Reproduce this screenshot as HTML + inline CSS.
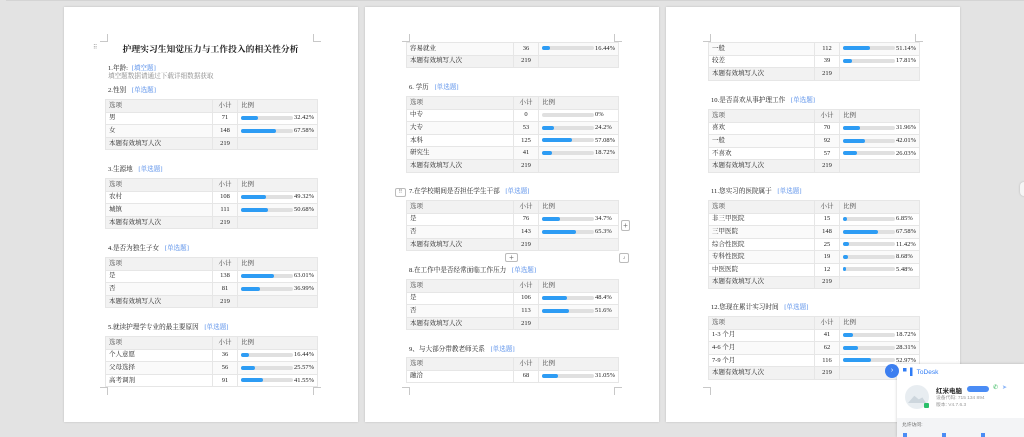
<!DOCTYPE html>
<html><head><meta charset="utf-8"><style>
*{margin:0;padding:0;box-sizing:border-box}
body{width:1024px;height:437px;background:#e3e3e3;position:relative;overflow:hidden;font-family:"Liberation Serif","Noto Serif CJK SC","Noto Sans CJK SC",serif;color:#222}
.topline{position:absolute;left:6px;top:0;width:1018px;height:1px;background:#d4d4d4}
.page{position:absolute;top:7px;width:294px;height:415px;background:#fff;box-shadow:0 0 2px rgba(0,0,0,.18)}
.a{position:absolute}
.q{position:absolute;font-size:6.6px;color:#222;white-space:nowrap}
.q b{font-weight:normal;color:#4a86e8;margin-left:4px}
table{position:absolute;border-collapse:collapse;table-layout:fixed;width:212px;font-size:6.5px;color:#222}
td{height:12.6px;border:1px solid #e6e6e6;padding:0 3px;white-space:nowrap;line-height:10px;vertical-align:middle}
td.c{text-align:center;padding:0}
tr.h td,tr.t td{background:#f2f2f2}
tr.h td{color:#444}
tr.o td{background:#fafafa}
.bar{display:inline-block;vertical-align:middle;width:52px;height:4px;background:#e0e0e0;border-radius:2px;position:relative;margin-right:1px}
.bar i{position:absolute;left:0;top:0;bottom:0;background:#2d9cf4;border-radius:2px}
.cn{position:absolute;width:8px;height:8px;border-color:#c8c8c8;border-style:solid;border-width:0}
.btn{position:absolute;width:11px;height:9px;border:1px solid #bbb;border-radius:2px;background:#fff;font-size:8px;line-height:7px;text-align:center;color:#777;font-family:"Liberation Sans",sans-serif}
</style></head><body>
<div class="topline"></div>

<!-- PAGE 1 -->
<div class="page" style="left:64px"></div>
<div class="cn" style="left:100px;top:34px;border-right-width:1px;border-bottom-width:1px"></div>
<div class="cn" style="left:313px;top:34px;border-left-width:1px;border-bottom-width:1px"></div>
<div class="cn" style="left:100px;top:387px;border-right-width:1px;border-top-width:1px"></div>
<div class="cn" style="left:313px;top:387px;border-left-width:1px;border-top-width:1px"></div>
<div class="a" style="left:93px;top:44px;font-size:6px;color:#999;letter-spacing:-1px">⠿</div>
<div class="a" style="left:100px;top:42px;width:221px;text-align:center;font-size:8.8px;font-weight:bold;color:#222">护理实习生知觉压力与工作投入的相关性分析</div>
<div class="q" style="left:108px;top:62px">1.年龄: <b style="margin-left:2px">[填空题]</b></div>
<div class="q" style="left:108px;top:70px;color:#888">填空题数据请通过下载详细数据获取</div>
<div class="q" style="left:108px;top:84px">2.性别 <b>[单选题]</b></div>
<table style="left:105px;top:99px"><colgroup><col style="width:107px"><col style="width:25px"><col style="width:80px"></colgroup>
<tr class="h"><td>选项</td><td class="c">小计</td><td>比例</td></tr>
<tr><td>男</td><td class="c">71</td><td><span class="bar"><i style="width:32%"></i></span>32.42%</td></tr>
<tr class="o"><td>女</td><td class="c">148</td><td><span class="bar"><i style="width:68%"></i></span>67.58%</td></tr>
<tr class="t"><td>本题有效填写人次</td><td class="c">219</td><td></td></tr></table>
<div class="q" style="left:108px;top:163px">3.生源地 <b>[单选题]</b></div>
<table style="left:105px;top:178px"><colgroup><col style="width:107px"><col style="width:25px"><col style="width:80px"></colgroup>
<tr class="h"><td>选项</td><td class="c">小计</td><td>比例</td></tr>
<tr><td>农村</td><td class="c">108</td><td><span class="bar"><i style="width:49%"></i></span>49.32%</td></tr>
<tr class="o"><td>城镇</td><td class="c">111</td><td><span class="bar"><i style="width:51%"></i></span>50.68%</td></tr>
<tr class="t"><td>本题有效填写人次</td><td class="c">219</td><td></td></tr></table>
<div class="q" style="left:108px;top:242px">4.是否为独生子女 <b>[单选题]</b></div>
<table style="left:105px;top:257px"><colgroup><col style="width:107px"><col style="width:25px"><col style="width:80px"></colgroup>
<tr class="h"><td>选项</td><td class="c">小计</td><td>比例</td></tr>
<tr><td>是</td><td class="c">138</td><td><span class="bar"><i style="width:63%"></i></span>63.01%</td></tr>
<tr class="o"><td>否</td><td class="c">81</td><td><span class="bar"><i style="width:37%"></i></span>36.99%</td></tr>
<tr class="t"><td>本题有效填写人次</td><td class="c">219</td><td></td></tr></table>
<div class="q" style="left:108px;top:321px">5.就读护理学专业的最主要原因 <b>[单选题]</b></div>
<table style="left:105px;top:336px"><colgroup><col style="width:107px"><col style="width:25px"><col style="width:80px"></colgroup>
<tr class="h"><td>选项</td><td class="c">小计</td><td>比例</td></tr>
<tr><td>个人意愿</td><td class="c">36</td><td><span class="bar"><i style="width:16%"></i></span>16.44%</td></tr>
<tr class="o"><td>父母选择</td><td class="c">56</td><td><span class="bar"><i style="width:26%"></i></span>25.57%</td></tr>
<tr><td>高考调剂</td><td class="c">91</td><td><span class="bar"><i style="width:42%"></i></span>41.55%</td></tr></table>

<!-- PAGE 2 -->
<div class="page" style="left:365px"></div>
<div class="cn" style="left:402px;top:34px;border-right-width:1px;border-bottom-width:1px"></div>
<div class="cn" style="left:614px;top:34px;border-left-width:1px;border-bottom-width:1px"></div>
<div class="cn" style="left:402px;top:387px;border-right-width:1px;border-top-width:1px"></div>
<div class="cn" style="left:614px;top:387px;border-left-width:1px;border-top-width:1px"></div>
<table style="left:406px;top:42px"><colgroup><col style="width:107px"><col style="width:25px"><col style="width:80px"></colgroup>
<tr class="o"><td>容易就业</td><td class="c">36</td><td><span class="bar"><i style="width:16%"></i></span>16.44%</td></tr>
<tr class="t"><td>本题有效填写人次</td><td class="c">219</td><td></td></tr></table>
<div class="q" style="left:409px;top:81px">6. 学历 <b>[单选题]</b></div>
<table style="left:406px;top:96px"><colgroup><col style="width:107px"><col style="width:25px"><col style="width:80px"></colgroup>
<tr class="h"><td>选项</td><td class="c">小计</td><td>比例</td></tr>
<tr><td>中专</td><td class="c">0</td><td><span class="bar"><i style="width:0"></i></span>0%</td></tr>
<tr class="o"><td>大专</td><td class="c">53</td><td><span class="bar"><i style="width:24%"></i></span>24.2%</td></tr>
<tr><td>本科</td><td class="c">125</td><td><span class="bar"><i style="width:57%"></i></span>57.08%</td></tr>
<tr class="o"><td>研究生</td><td class="c">41</td><td><span class="bar"><i style="width:19%"></i></span>18.72%</td></tr>
<tr class="t"><td>本题有效填写人次</td><td class="c">219</td><td></td></tr></table>
<div class="btn" style="left:395px;top:188px;font-size:5px;line-height:7px">⠿</div>
<div class="q" style="left:409px;top:185px">7.在学校期间是否担任学生干部 <b>[单选题]</b></div>
<table style="left:406px;top:200px"><colgroup><col style="width:107px"><col style="width:25px"><col style="width:80px"></colgroup>
<tr class="h"><td>选项</td><td class="c">小计</td><td>比例</td></tr>
<tr><td>是</td><td class="c">76</td><td><span class="bar"><i style="width:35%"></i></span>34.7%</td></tr>
<tr class="o"><td>否</td><td class="c">143</td><td><span class="bar"><i style="width:65%"></i></span>65.3%</td></tr>
<tr class="t"><td>本题有效填写人次</td><td class="c">219</td><td></td></tr></table>
<div class="btn" style="left:621px;top:220px;width:9px;height:11px;line-height:9px">+</div>
<div class="btn" style="left:505px;top:253px;width:13px">+</div>
<div class="btn" style="left:619px;top:253px;width:10px;height:10px;font-size:6px">⌟</div>
<div class="q" style="left:409px;top:264px">8.在工作中是否经常面临工作压力 <b>[单选题]</b></div>
<table style="left:406px;top:279px"><colgroup><col style="width:107px"><col style="width:25px"><col style="width:80px"></colgroup>
<tr class="h"><td>选项</td><td class="c">小计</td><td>比例</td></tr>
<tr><td>是</td><td class="c">106</td><td><span class="bar"><i style="width:48%"></i></span>48.4%</td></tr>
<tr class="o"><td>否</td><td class="c">113</td><td><span class="bar"><i style="width:52%"></i></span>51.6%</td></tr>
<tr class="t"><td>本题有效填写人次</td><td class="c">219</td><td></td></tr></table>
<div class="q" style="left:409px;top:343px">9、与大部分带教老师关系 <b>[单选题]</b></div>
<table style="left:406px;top:357px"><colgroup><col style="width:107px"><col style="width:25px"><col style="width:80px"></colgroup>
<tr class="h"><td>选项</td><td class="c">小计</td><td>比例</td></tr>
<tr><td>融洽</td><td class="c">68</td><td><span class="bar"><i style="width:31%"></i></span>31.05%</td></tr></table>

<!-- PAGE 3 -->
<div class="page" style="left:666px"></div>
<div class="cn" style="left:703px;top:34px;border-right-width:1px;border-bottom-width:1px"></div>
<div class="cn" style="left:915px;top:34px;border-left-width:1px;border-bottom-width:1px"></div>
<div class="cn" style="left:703px;top:387px;border-right-width:1px;border-top-width:1px"></div>
<table style="left:708px;top:42px"><colgroup><col style="width:106px"><col style="width:25px"><col style="width:80px"></colgroup>
<tr class="o"><td>一般</td><td class="c">112</td><td><span class="bar"><i style="width:51%"></i></span>51.14%</td></tr>
<tr><td>较差</td><td class="c">39</td><td><span class="bar"><i style="width:18%"></i></span>17.81%</td></tr>
<tr class="t"><td>本题有效填写人次</td><td class="c">219</td><td></td></tr></table>
<div class="q" style="left:711px;top:94px">10.是否喜欢从事护理工作 <b>[单选题]</b></div>
<table style="left:708px;top:109px"><colgroup><col style="width:106px"><col style="width:25px"><col style="width:80px"></colgroup>
<tr class="h"><td>选项</td><td class="c">小计</td><td>比例</td></tr>
<tr><td>喜欢</td><td class="c">70</td><td><span class="bar"><i style="width:32%"></i></span>31.96%</td></tr>
<tr class="o"><td>一般</td><td class="c">92</td><td><span class="bar"><i style="width:42%"></i></span>42.01%</td></tr>
<tr><td>不喜欢</td><td class="c">57</td><td><span class="bar"><i style="width:26%"></i></span>26.03%</td></tr>
<tr class="t"><td>本题有效填写人次</td><td class="c">219</td><td></td></tr></table>
<div class="q" style="left:711px;top:185px">11.您实习的医院属于 <b>[单选题]</b></div>
<table style="left:708px;top:200px"><colgroup><col style="width:106px"><col style="width:25px"><col style="width:80px"></colgroup>
<tr class="h"><td>选项</td><td class="c">小计</td><td>比例</td></tr>
<tr><td>非三甲医院</td><td class="c">15</td><td><span class="bar"><i style="width:7%"></i></span>6.85%</td></tr>
<tr class="o"><td>三甲医院</td><td class="c">148</td><td><span class="bar"><i style="width:68%"></i></span>67.58%</td></tr>
<tr><td>综合性医院</td><td class="c">25</td><td><span class="bar"><i style="width:11%"></i></span>11.42%</td></tr>
<tr class="o"><td>专科性医院</td><td class="c">19</td><td><span class="bar"><i style="width:9%"></i></span>8.68%</td></tr>
<tr><td>中医医院</td><td class="c">12</td><td><span class="bar"><i style="width:5%"></i></span>5.48%</td></tr>
<tr class="t"><td>本题有效填写人次</td><td class="c">219</td><td></td></tr></table>
<div class="q" style="left:711px;top:301px">12.您现在累计实习时间 <b>[单选题]</b></div>
<table style="left:708px;top:316px"><colgroup><col style="width:106px"><col style="width:25px"><col style="width:80px"></colgroup>
<tr class="h"><td>选项</td><td class="c">小计</td><td>比例</td></tr>
<tr><td>1-3 个月</td><td class="c">41</td><td><span class="bar"><i style="width:19%"></i></span>18.72%</td></tr>
<tr class="o"><td>4-6 个月</td><td class="c">62</td><td><span class="bar"><i style="width:28%"></i></span>28.31%</td></tr>
<tr><td>7-9 个月</td><td class="c">116</td><td><span class="bar"><i style="width:53%"></i></span>52.97%</td></tr>
<tr class="t"><td>本题有效填写人次</td><td class="c">219</td><td></td></tr></table>

<!-- ToDesk panel -->
<div class="a" style="left:897px;top:364px;width:127px;height:73px;background:#fff;box-shadow:0 0 3px rgba(0,0,0,.2);font-family:'Liberation Sans','Noto Sans CJK SC',sans-serif">
  <div class="a" style="left:6px;top:3px;font-size:6.5px;color:#2f7cf6"><span style="font-size:7px">▘▌</span> ToDesk</div>
  <div class="a" style="left:8px;top:21px;width:24px;height:24px;border-radius:50%;background:#e8edf1"></div>
  <div class="a" style="left:11px;top:31px;width:18px;height:8px;background:#cdd6dd;clip-path:polygon(0 100%,35% 10%,60% 55%,80% 30%,100% 100%)"></div>
  <div class="a" style="left:27px;top:39px;width:5px;height:5px;background:#2bbf6a;border-radius:1px"></div>
  <div class="a" style="left:39px;top:21px;font-size:6.5px;color:#222;font-weight:bold">红米电脑</div>
  <div class="a" style="left:70px;top:22px;width:22px;height:6px;background:#4a8cf5;border-radius:3px"></div>
  <div class="a" style="left:96px;top:20px;font-size:6px;color:#22b14c">✆</div>
  <div class="a" style="left:105px;top:20px;font-size:6px;color:#8ab4f8">➤</div>
  <div class="a" style="left:39px;top:30px;font-size:4.8px;color:#999">设备代码: 715 134 894</div>
  <div class="a" style="left:39px;top:37px;font-size:4.8px;color:#999">版本: V4.7.6.3</div>
  <div class="a" style="left:0;top:54px;width:127px;height:19px;background:#f3f4f6"></div>
  <div class="a" style="left:5px;top:57px;font-size:4.8px;color:#666">允许访问:</div>
  <div class="a" style="left:6px;top:69px;width:4px;height:4px;background:#4a8cf5"></div>
  <div class="a" style="left:45px;top:69px;width:4px;height:4px;background:#4a8cf5"></div>
  <div class="a" style="left:84px;top:69px;width:4px;height:4px;background:#4a8cf5"></div>
</div>
<div class="a" style="left:885px;top:364px;width:14px;height:14px;border-radius:50%;background:#3d7ff0;color:#fff;font-size:7px;line-height:14px;text-align:center;font-family:'Liberation Sans',sans-serif">›</div>
<div class="a" style="left:1020px;top:182px;width:8px;height:14px;border-radius:7px;background:#f5f5f5;box-shadow:0 0 2px rgba(0,0,0,.2)"></div>
</body></html>
